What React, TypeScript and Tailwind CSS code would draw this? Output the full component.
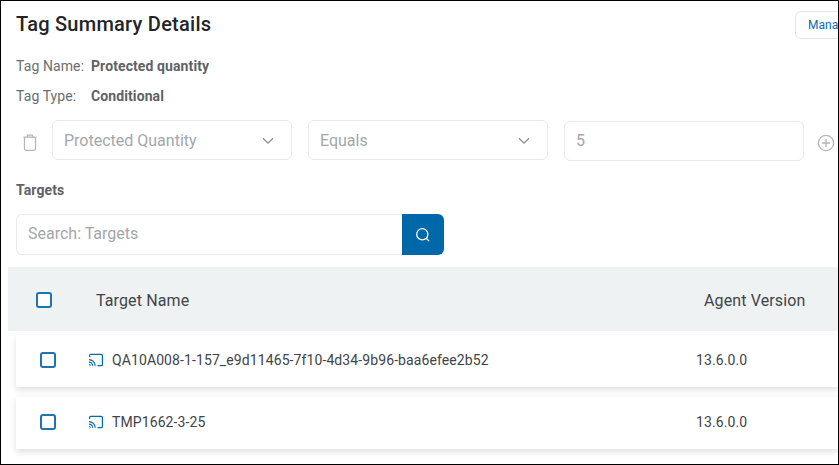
import React from "react";

const Chevron = () => (
  <svg width="12" height="8" viewBox="0 0 12 8" fill="none" stroke="#8a8f94" strokeWidth="1.3">
    <path d="M1 1.2 6 6.2 11 1.2" />
  </svg>
);

const Trash = () => (
  <svg width="14" height="17" viewBox="0 0 14 17" fill="none" stroke="#b4b6b8" strokeWidth="1.3">
    <path d="M0.5 3.2h13" />
    <path d="M4.5 3V1.2h5v2" />
    <path d="M1.5 3.2v11.6c0 .9.6 1.5 1.5 1.5h8c.9 0 1.5-.6 1.5-1.5V3.2" />
  </svg>
);

const Cast = () => (
  <svg width="16" height="14" viewBox="0 0 16 14" fill="none" stroke="#0067a8" strokeWidth="1.2" className="shrink-0">
    <path d="M1.6 4V2.6c0-.8.6-1.3 1.3-1.3h10.2c.7 0 1.3.5 1.3 1.3v8.8c0 .8-.6 1.3-1.3 1.3H9.5" />
    <path d="M1 6.6c3.4 0 6.2 2.8 6.2 6.2" />
    <path d="M1 9.1c2 0 3.7 1.7 3.7 3.7" />
    <path d="M1 11.5c.7 0 1.3.6 1.3 1.3" />
  </svg>
);

const Check = () => <span className="block w-4 h-4 shrink-0 rounded-[3px] border-2 border-[#1f74ae] bg-white" />;

const Select = ({ label }: { label: string }) => (
  <div className="w-[240px] h-[40px] flex items-center justify-between pl-[11px] pr-[17px] pt-[2px] rounded-md border border-[#e8e9ea] text-[16px] text-[#a3a7ab]">
    <span>{label}</span>
    <Chevron />
  </div>
);

const Row = ({ name }: { name: string }) => (
  <div className="h-[52px] ml-[15px] flex items-center bg-white shadow-[0_3px_7px_rgba(0,0,0,0.13)] text-[14px] tracking-[0.1px] text-[#3f4448]">
    <div className="w-[72px] pl-[24px] -translate-y-px">
      <Check />
    </div>
    <div className="w-[608px] flex items-center gap-[8px] -translate-y-px">
      <Cast />
      <span>{name}</span>
    </div>
    <span className="-translate-y-px">13.6.0.0</span>
  </div>
);

export default function App() {
  return (
    <div className="w-[839px] h-[465px] overflow-hidden border border-black bg-white font-['Roboto',sans-serif]">
      <div className="w-[837px] h-[463px] overflow-hidden">
        <div className="flex justify-between pl-[15px] pt-[10px] h-[48px] w-[850px]">
          <h1 className="text-[20px] tracking-[0.25px] leading-[26px] font-medium text-[#212529]">Tag Summary Details</h1>
          <div className="w-[65px] h-[28px] mr-[-9px] ml-auto flex items-center pl-[12px] rounded-md border border-[#e3e5e7] text-[12px] text-[#0a6db3] bg-white">
            Manage
          </div>
        </div>
        <div className="pl-[15px] mt-[7px] flex h-[20px] items-center text-[14px] tracking-[0.1px] text-[#6a6e72]">
          <span className="w-[75px]">Tag Name:</span>
          <span className="font-bold text-[#5f6266]">Protected quantity</span>
        </div>
        <div className="pl-[15px] mt-[10px] flex h-[20px] items-center text-[14px] tracking-[0.1px] text-[#6a6e72]">
          <span className="w-[75px]">Tag Type:</span>
          <span className="font-bold text-[#5f6266]">Conditional</span>
        </div>
        <div className="flex items-center mt-[14px] pl-[22px] h-[40px]">
          <span className="w-[29px] flex mt-[5px]"><Trash /></span>
          <div className="flex gap-[16px]">
            <Select label="Protected Quantity" />
            <Select label="Equals" />
            <div className="w-[240px] h-[40px] mt-[1px] flex items-center pl-[11px] rounded-md border border-[#e8e9ea] text-[16px] text-[#a3a7ab]">5</div>
          </div>
          <svg width="18" height="18" viewBox="0 0 18 18" fill="none" stroke="#b4b6b8" strokeWidth="1.3" className="ml-[13px] mt-[5px] shrink-0">
            <circle cx="9" cy="9" r="7.6" />
            <path d="M9 5v8M5 9h8" />
          </svg>
        </div>
        <div className="pl-[15px] mt-[21px] h-[18px] leading-[18px] text-[14px] tracking-[0.1px] font-bold text-[#5f6266]">Targets</div>
        <div className="flex ml-[15px] mt-[15px] w-[428px] h-[41px]">
          <div className="w-[386px] flex items-center pl-[11px] pb-[1px] rounded-l-md border border-r-0 border-[#e8e9ea] text-[16px] text-[#a3a7ab]">
            Search: Targets
          </div>
          <div className="w-[42px] flex items-center justify-center rounded-r-md bg-[#0067a8]">
            <svg width="16" height="16" viewBox="0 0 16 16" fill="none" stroke="#fff" strokeWidth="1.3">
              <circle cx="7.3" cy="7.3" r="5.6" />
              <path d="m11.5 11.5 2.6 2.6" />
            </svg>
          </div>
        </div>
        <div className="ml-[7px] mt-[12px] h-[64px] flex items-center bg-[#eff2f3] text-[16px] tracking-[0.12px] text-[#3f4448]">
          <div className="w-[88px] pl-[28px] pt-[2px]"><Check /></div>
          <div className="w-[608px] pt-[3px]">Target Name</div>
          <div className="pt-[3px]">Agent Version</div>
        </div>
        <div className="mt-[4px] flex flex-col gap-[10px]">
          <Row name="QA10A008-1-157_e9d11465-7f10-4d34-9b96-baa6efee2b52" />
          <Row name="TMP1662-3-25" />
        </div>
      </div>
    </div>
  );
}
